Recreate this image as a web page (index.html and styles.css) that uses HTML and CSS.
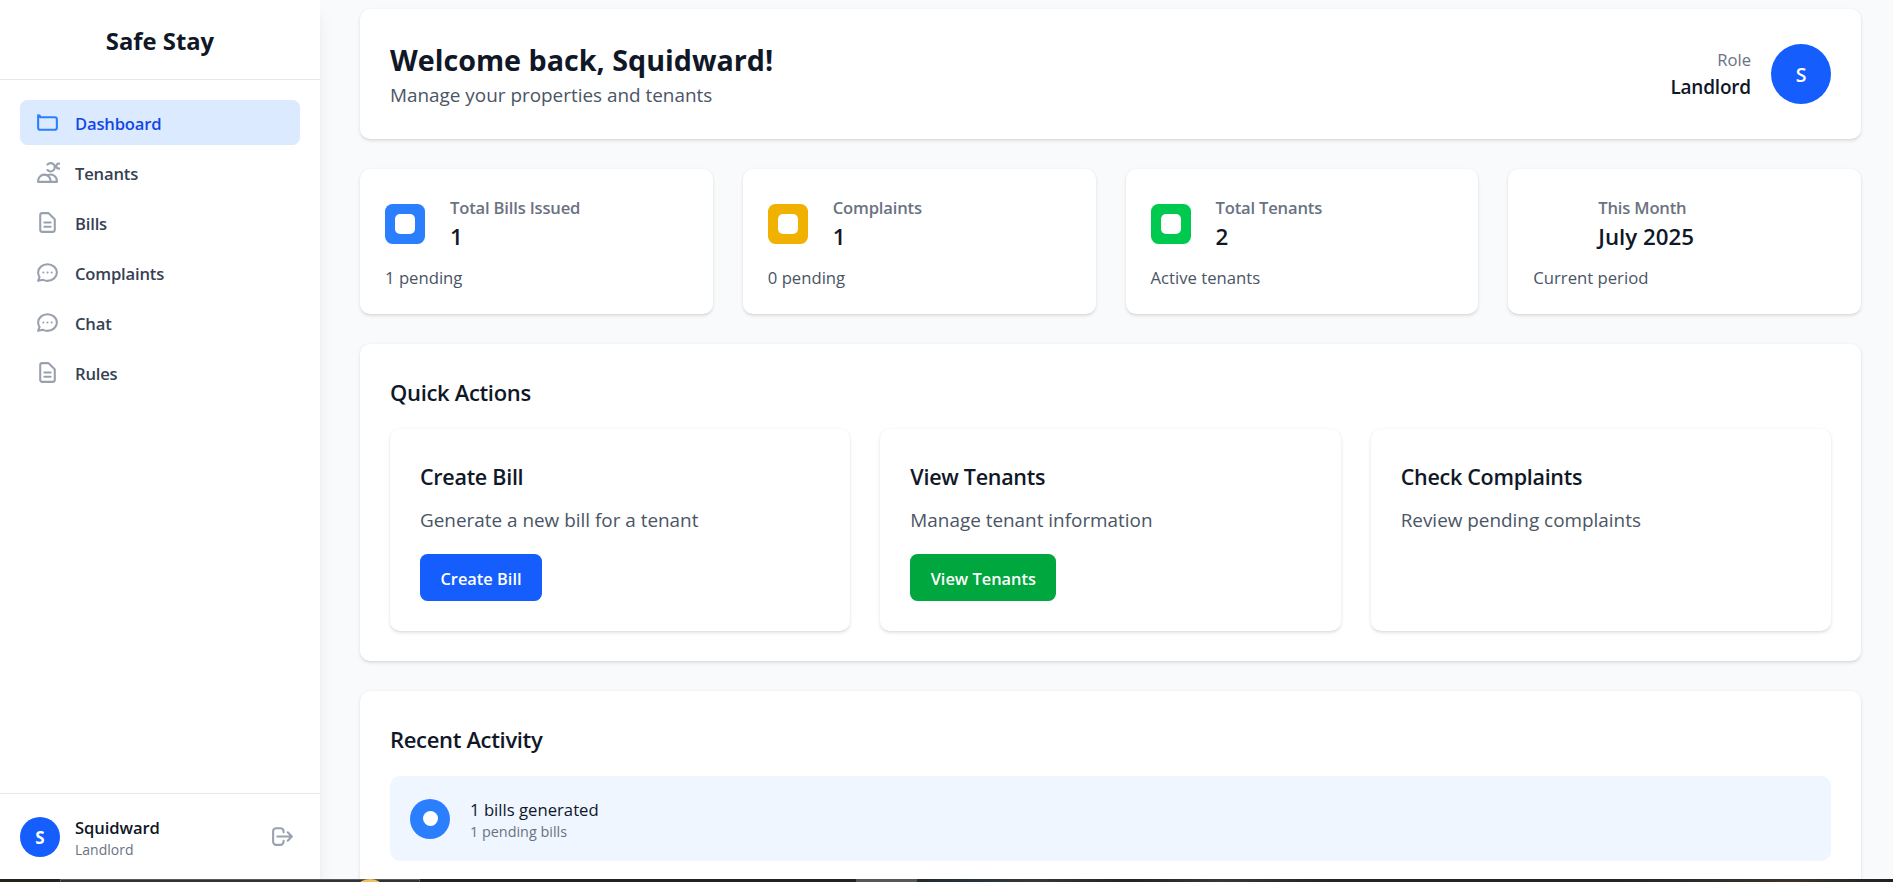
FILE: index.html
```html
<!DOCTYPE html>
<html lang="en">
<head>
<meta charset="utf-8">
<title>Safe Stay</title>
<link rel="stylesheet" href="styles.css">
</head>
<body>
<div class="app">
  <aside class="sidebar">
    <div class="brand">Safe Stay</div>
    <nav class="nav">
      <a class="nav-item active"><svg class="icon" viewBox="0 0 24 24"><path d="M3 7v10a2 2 0 002 2h14a2 2 0 002-2V9a2 2 0 00-2-2H5a2 2 0 00-2-2z"/></svg>Dashboard</a>
      <a class="nav-item"><svg class="icon" viewBox="0 0 24 24"><path d="M12 4.354a4 4 0 110 5.292M15 21H3v-1a6 6 0 0112 0v1zm0 0h6v-1a6 6 0 00-9-5.197m13.5-9a2.5 2.5 0 11-5 0 2.5 2.5 0 015 0z"/></svg>Tenants</a>
      <a class="nav-item"><svg class="icon" viewBox="0 0 24 24"><path d="M9 12h6m-6 4h6m2 5H7a2 2 0 01-2-2V5a2 2 0 012-2h5.586a1 1 0 01.707.293l5.414 5.414a1 1 0 01.293.707V19a2 2 0 01-2 2z"/></svg>Bills</a>
      <a class="nav-item"><svg class="icon" viewBox="0 0 24 24"><path d="M8 12h.01M12 12h.01M16 12h.01M21 12c0 4.418-4.03 8-9 8a9.863 9.863 0 01-4.255-.949L3 20l1.395-3.72C3.512 15.042 3 13.574 3 12c0-4.418 4.03-8 9-8s9 3.582 9 8z"/></svg>Complaints</a>
      <a class="nav-item"><svg class="icon" viewBox="0 0 24 24"><path d="M8 12h.01M12 12h.01M16 12h.01M21 12c0 4.418-4.03 8-9 8a9.863 9.863 0 01-4.255-.949L3 20l1.395-3.72C3.512 15.042 3 13.574 3 12c0-4.418 4.03-8 9-8s9 3.582 9 8z"/></svg>Chat</a>
      <a class="nav-item"><svg class="icon" viewBox="0 0 24 24"><path d="M9 12h6m-6 4h6m2 5H7a2 2 0 01-2-2V5a2 2 0 012-2h5.586a1 1 0 01.707.293l5.414 5.414a1 1 0 01.293.707V19a2 2 0 01-2 2z"/></svg>Rules</a>
    </nav>
    <div class="account">
      <div class="avatar">S</div>
      <div class="account-text">
        <div class="account-name">Squidward</div>
        <div class="account-role">Landlord</div>
      </div>
      <svg class="icon logout" viewBox="0 0 24 24"><path d="M17 16l4-4m0 0l-4-4m4 4H7m6 4v1a3 3 0 01-3 3H6a3 3 0 01-3-3V7a3 3 0 013-3h4a3 3 0 013 3v1"/></svg>
    </div>
  </aside>

  <main class="main">
    <header class="card welcome">
      <div>
        <h1 class="welcome-title">Welcome back, Squidward!</h1>
        <p class="welcome-sub">Manage your properties and tenants</p>
      </div>
      <div class="profile">
        <div class="profile-text">
          <div class="role-label">Role</div>
          <div class="role-name">Landlord</div>
        </div>
        <div class="avatar avatar-lg">S</div>
      </div>
    </header>

    <section class="stats">
      <div class="card stat">
        <div class="stat-top"><span class="tile blue"><i></i></span><div><div class="stat-label">Total Bills Issued</div><div class="stat-value">1</div></div></div>
        <div class="stat-note">1 pending</div>
      </div>
      <div class="card stat">
        <div class="stat-top"><span class="tile yellow"><i></i></span><div><div class="stat-label">Complaints</div><div class="stat-value">1</div></div></div>
        <div class="stat-note">0 pending</div>
      </div>
      <div class="card stat">
        <div class="stat-top"><span class="tile green"><i></i></span><div><div class="stat-label">Total Tenants</div><div class="stat-value">2</div></div></div>
        <div class="stat-note">Active tenants</div>
      </div>
      <div class="card stat">
        <div class="stat-top"><span class="tile"></span><div><div class="stat-label">This Month</div><div class="stat-value">July 2025</div></div></div>
        <div class="stat-note">Current period</div>
      </div>
    </section>

    <section class="card panel">
      <h2 class="panel-title">Quick Actions</h2>
      <div class="actions">
        <div class="card action">
          <h3 class="action-title">Create Bill</h3>
          <p class="action-text">Generate a new bill for a tenant</p>
          <button class="btn btn-blue">Create Bill</button>
        </div>
        <div class="card action">
          <h3 class="action-title">View Tenants</h3>
          <p class="action-text">Manage tenant information</p>
          <button class="btn btn-green">View Tenants</button>
        </div>
        <div class="card action">
          <h3 class="action-title">Check Complaints</h3>
          <p class="action-text">Review pending complaints</p>
        </div>
      </div>
    </section>

    <section class="card panel">
      <h2 class="panel-title">Recent Activity</h2>
      <div class="activity">
        <span class="dot"><i></i></span>
        <div>
          <div class="activity-name">1 bills generated</div>
          <div class="activity-sub">1 pending bills</div>
        </div>
      </div>
    </section>
  </main>
</div>
<div class="taskbar"><div class="task-a"></div><div class="task-b"><span class="task-ball"></span></div><div class="task-c"></div><div class="task-d"></div><div class="task-e"></div></div>
</body>
</html>
```
FILE: styles.css
```css
* { box-sizing: border-box; margin: 0; padding: 0; }

body {
  height: 882px;
  overflow: hidden;
  display: flex;
  flex-direction: column;
  background: #f9fafb;
  color: #101828;
  font-family: "Open Sans", "Noto Sans", sans-serif;
}

.app { height: 879px; display: flex; overflow: hidden; }

/* Sidebar */
.sidebar {
  width: 320px;
  flex: none;
  display: flex;
  flex-direction: column;
  background: #fff;
  box-shadow: 0 12.5px 18.75px -3.75px rgba(0, 0, 0, .1), 0 5px 7.5px -5px rgba(0, 0, 0, .1);
}
.brand {
  height: 80px;
  padding-top: 2px;
  border-bottom: 1px solid #e5e7eb;
  text-align: center;
  font-size: 23.8px;
  font-weight: 700;
  line-height: 78px;
}
.nav { flex: 1; padding: 20px; display: flex; flex-direction: column; gap: 5px; }
.nav-item {
  height: 45px;
  padding: 2px 15px 0;
  display: flex;
  align-items: center;
  gap: 15px;
  border-radius: 7.5px;
  color: #364153;
  font-size: 16.6px;
  font-weight: 600;
  letter-spacing: -.18px;
  line-height: 25px;
}
.nav-item.active { background: #dbeafe; color: #1447e6; }
.icon {
  width: 25px;
  height: 25px;
  flex: none;
  overflow: hidden;
  fill: none;
  stroke: #99a1af;
  stroke-width: 2;
  stroke-linecap: round;
  stroke-linejoin: round;
}
.nav-item .icon { margin-top: -2px; }
.active .icon { stroke: #2b7fff; }
.account {
  height: 86px;
  padding: 20px;
  display: flex;
  align-items: center;
  gap: 15px;
  border-top: 1px solid #e5e7eb;
}
.account-text { flex: 1; padding-top: 1px; }
.account-name { font-size: 16.6px; font-weight: 600; letter-spacing: -.1px; line-height: 25px; }
.account-role { color: #6a7282; font-size: 14px; line-height: 20px; }
.logout { margin-right: 5px; }
.avatar {
  width: 40px;
  height: 40px;
  border-radius: 50%;
  background: #155dfc;
  color: #fff;
  text-align: center;
  font-size: 17px;
  font-weight: 700;
  line-height: 41px;
}
.avatar-lg { width: 60px; height: 60px; font-size: 19.5px; font-weight: 600; line-height: 62px; }

/* Content */
.main {
  flex: 1;
  padding: 9px 32px 0 40px;
  display: flex;
  flex-direction: column;
  gap: 30px;
}
.card {
  flex: none;
  border-radius: 10px;
  background: #fff;
  box-shadow: 0 1.25px 3.75px rgba(0, 0, 0, .1), 0 1.25px 2.5px -1.25px rgba(0, 0, 0, .1);
}
.welcome { height: 130px; padding: 0 30px; display: flex; align-items: center; justify-content: space-between; }
.welcome-title { height: 40px; padding-top: 1px; font-size: 28.7px; font-weight: 700; line-height: 40px; }
.welcome-sub { height: 30px; padding-top: 1px; color: #4a5565; font-size: 18.9px; line-height: 30px; }
.profile { display: flex; align-items: center; gap: 20px; text-align: right; }
.role-label { color: #6a7282; font-size: 16.6px; line-height: 25px; }
.role-name { font-size: 19px; font-weight: 600; letter-spacing: -.2px; line-height: 30px; }

.stats { display: grid; grid-template-columns: repeat(4, 1fr); gap: 30px; }
.stat { height: 145px; padding: 25px; }
.stat-top { display: flex; align-items: center; gap: 25px; margin-bottom: 10px; }
.tile { width: 40px; height: 40px; display: grid; place-items: center; border-radius: 7.5px; }
.tile i { width: 20px; height: 20px; border-radius: 5px; background: #fff; }
.blue { background: #2b7fff; }
.yellow { background: #f0b100; }
.green { background: #00c950; }
.stat-label {
  height: 25px;
  padding-top: 1px;
  color: #6a7282;
  font-size: 16.6px;
  font-weight: 600;
  letter-spacing: -.18px;
  line-height: 25px;
}
.stat-value { height: 35px; font-size: 22.3px; font-weight: 600; line-height: 36px; }
.stat-note { padding-top: 1px; color: #4a5565; font-size: 16.7px; line-height: 25px; }

.panel { padding: 30px; }
.panel-title {
  height: 35px;
  margin-bottom: 20px;
  font-size: 22px;
  font-weight: 600;
  letter-spacing: -.33px;
  line-height: 36px;
}
.actions { display: grid; grid-template-columns: repeat(3, 1fr); gap: 30px; }
.action { height: 202px; padding: 30px; }
.action-title {
  height: 35px;
  margin-bottom: 10px;
  font-size: 21.5px;
  font-weight: 600;
  letter-spacing: -.28px;
  line-height: 36px;
}
.action-text { height: 30px; margin-bottom: 20px; color: #4a5565; font-size: 18.9px; line-height: 32px; }
.btn {
  height: 47px;
  padding-top: 1px;
  border: 0;
  border-radius: 7.5px;
  color: #fff;
  font-family: inherit;
  font-size: 16.4px;
  font-weight: 600;
}
.btn-blue { width: 122px; background: #155dfc; }
.btn-green { width: 146px; background: #00a63e; }

.activity { height: 85px; padding: 20px; display: flex; align-items: center; gap: 20px; border-radius: 10px; background: #eff6ff; }
.dot { width: 40px; height: 40px; display: grid; place-items: center; border-radius: 50%; background: #2b7fff; }
.dot i { width: 15px; height: 15px; border-radius: 50%; background: #fff; }
.activity-name { height: 25px; font-size: 16.7px; line-height: 28px; }
.activity-sub { height: 20px; color: #6a7282; font-size: 14.4px; line-height: 22px; }

/* Top edge of the desktop taskbar */
.taskbar { height: 3px; display: flex; overflow: hidden; background: #222326; }
.task-a { width: 60px; background: #23241c; }
.task-b { width: 360px; padding-left: 298px; border: 1px solid #5a5a5c; border-bottom: 0; background: #333335; }
.task-ball { display: block; width: 22px; height: 12px; margin-top: -1px; border-radius: 50%; background: #eec263; }
.task-c { width: 436px; background: #222224; }
.task-d { width: 61px; background: #565857; }
.task-e { flex: 1; background: linear-gradient(90deg, #222b2f, #26343a 6%, #363638 12%, #232424 22%, #363636 31%, #232424 43%, #232424 70%, #3a322a 90%, #20211f); }
```
